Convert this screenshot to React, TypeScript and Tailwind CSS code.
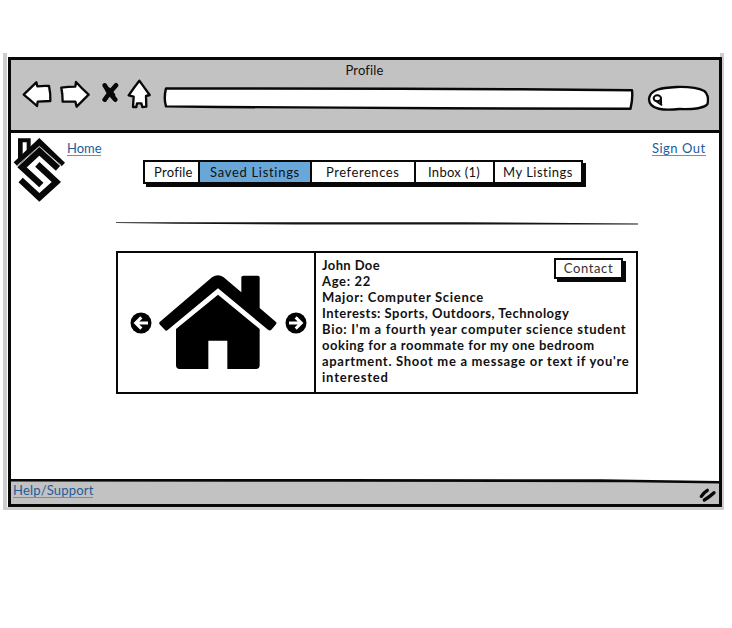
import React from "react";

const ink = "#080808";

function BackArrow() {
  return (
    <svg width="30" height="28" viewBox="66 105 90 84" fill="#fff" stroke={ink} strokeWidth="7" strokeLinejoin="round">
      <path d="M71 149 L109 112 L112 124 Q130 122 147 123 Q152 145 151 168 L113 170 L111 183 Q92 166 71 149Z" />
    </svg>
  );
}

function ForwardArrow() {
  return (
    <svg width="30" height="28" viewBox="180 105 90 84" fill="#fff" stroke={ink} strokeWidth="7" strokeLinejoin="round">
      <path d="M184 128 Q204 125 226 125 L228 111 Q246 131 266 149 L230 185 L226 170 L188 170 Q188 148 184 128Z" />
    </svg>
  );
}

function StopCross() {
  return (
    <svg width="18" height="22" viewBox="304 108 54 66" fill="none" stroke={ink} strokeLinecap="round">
      <path d="M315 121 Q328 145 347 164" strokeWidth="14" />
      <path d="M349 121 Q332 138 315 164" strokeWidth="14" />
      <path d="M326 136 L338 150" strokeWidth="17" />
    </svg>
  );
}

function HomeIcon() {
  return (
    <svg width="24" height="30" viewBox="381 102 72 90" fill="#fff" stroke={ink} strokeWidth="7" strokeLinejoin="round">
      <path d="M418 107 Q433 128 449 150 L438 153 L439 185 L427 186 L424 175 L411 175 L409 186 L399 186 L401 155 L386 151 Q403 126 418 107Z" />
    </svg>
  );
}

function AddressBar() {
  return (
    <svg width="472" height="24" viewBox="162 86 472 24" fill="#fff" stroke={ink} strokeWidth="2.4" strokeLinejoin="round">
      <path d="M166 88.4 L400 88.8 L520 89.3 L632 90.2 Q633 98 630.5 108.8 L440 108.3 L340 107.6 L220 107 L166 106.4 Q163.5 98 166 88.4Z" />
    </svg>
  );
}

function SearchBox() {
  return (
    <svg width="64" height="28" viewBox="141 119 192 84" fill="#fff" stroke={ink} strokeWidth="7" strokeLinecap="round">
      <path d="M147 161 C150 133 182 127 230 125 C268 124 299 130 313 137 C323 145 325 162 323 175 C316 187 283 193 238 191 C195 196 147 194 147 161Z" />
      <ellipse cx="172" cy="159" rx="11" ry="9" strokeWidth="6" />
      <path d="M183 161 L183 177 M172 170 L184 178" strokeWidth="6" />
    </svg>
  );
}

function Logo() {
  return (
    <svg width="53" height="66" viewBox="39 36 159 198" fill="none" stroke={ink}>
      <path fill={ink} stroke="none" fillRule="evenodd" d="M54 40 H92 V84 L54 118Z M68 52 V88 L80 78 V52Z" />
      <path fill={ink} stroke="none" d="M118 39 L195 113 L185 124 L118 65 L52 124 L41 112Z" />
      <path d="M174 130 L118 79 L66 127 L124 180" strokeWidth="19" />
      <path d="M112 118 L169 171 L118 217 L62 165" strokeWidth="19" />
      <path d="M50 123 L118 64 L184 122" stroke="#ddd" strokeWidth="2.5" />
    </svg>
  );
}

function House() {
  return (
    <svg width="118" height="95" viewBox="147 105 354 285" fill="#000">
      <path d="M149 246 L307 111 Q324 101 340 111 L394 157 V112 Q394 107 400 107 H444 Q449 107 449 112 V204 L498 246 Q501 249 498 253 L484 269 Q480 273 475 270 L324 145 L173 270 Q169 274 165 270 L150 254 Q146 250 149 246Z" />
      <path d="M198 267 L324 164 L449 267 V376 Q449 387 438 387 H352 V302 H295 V387 H209 Q198 387 198 376Z" />
    </svg>
  );
}

function CircleArrow({ flip = false }: { flip?: boolean }) {
  return (
    <svg width="22" height="22" viewBox="0 0 66 66" className={flip ? "-scale-x-100" : ""}>
      <circle cx="33" cy="33" r="31.5" fill="#000" />
      <path d="M54 33 H18 M34 16 L17 33 L34 50" fill="none" stroke="#fff" strokeWidth="9" />
    </svg>
  );
}

const tabs = [
  { label: "Profile", style: "w-[53px] pl-[9px] tracking-[0.25px]" },
  { label: "Saved Listings", style: "w-[112px] pl-[10px] bg-[#69a7d8] border-l-2 tracking-[0.7px]" },
  { label: "Preferences", style: "w-[104px] pl-[14px] border-l-2 tracking-[0.55px]" },
  { label: "Inbox (1)", style: "w-[79px] pl-[12px] border-l-2 tracking-[0.3px]" },
  { label: "My Listings", style: "w-[88px] pl-[8px] border-l-2 tracking-[0.5px]" },
];

const details = [
  { text: "John Doe", style: "tracking-[0.4px]" },
  { text: "Age: 22", style: "tracking-[0.65px]" },
  { text: "Major: Computer Science", style: "tracking-[0.7px]" },
  { text: "Interests: Sports, Outdoors, Technology", style: "tracking-[0.5px]" },
  { text: "Bio: I'm a fourth year computer science student", style: "tracking-[0.69px]" },
  { text: "ooking for a roommate for my one bedroom", style: "tracking-[0.52px]" },
  { text: "apartment. Shoot me a message or text if you're", style: "tracking-[0.69px]" },
  { text: "interested", style: "tracking-[0.8px]" },
];

const link = "h-[15px] border-b border-[#5796c8] text-[13px] leading-[15px] text-[#1d5b9b] whitespace-nowrap";

export default function App() {
  return (
    <div className="h-[628px] w-[732px] overflow-hidden bg-white pt-[53px] pl-[3px] font-['Lato',sans-serif] text-[13px] text-[#111]">
      <div className="h-[457px] w-[721px] border-x-4 border-b-3 border-[#cdcdcd] pt-1 pl-px">
        <div className="flex h-[450px] w-[714px] flex-col border-3 border-[#080808] bg-[#c2c2c2]">
          <header className="h-[73px] shrink-0 border-b-3 border-[#080808]">
            <div className="flex h-[21px] justify-center pt-[2px] pr-px leading-[16px] tracking-[0.15px]">Profile</div>
            <div className="flex h-[30px] items-start">
              <div className="ml-[11px] -mt-px"><BackArrow /></div>
              <div className="ml-[8px] -mt-px"><ForwardArrow /></div>
              <div className="ml-[11px]"><StopCross /></div>
              <div className="ml-[8px] -mt-[2px]"><HomeIcon /></div>
              <div className="ml-[11px] pt-[5px]"><AddressBar /></div>
              <div className="ml-[13px] pt-[4px]"><SearchBox /></div>
            </div>
          </header>

          <main className="h-[346px] shrink-0 bg-white">
            <div className="flex h-[89px]">
              <div className="w-[56px] pt-[4px] pl-[2px]"><Logo /></div>
              <div className="w-[76px] pt-[8px]">
                <a className={`${link} block w-[34px]`}>Home</a>
              </div>
              <nav className="mt-[27px] flex h-[24px] w-[440px] border-2 border-[#080808] bg-white shadow-[3px_3px_0_#080808]">
                {tabs.map((tab) => (
                  <div key={tab.label} className={`border-[#080808] leading-[20px] whitespace-nowrap ${tab.style}`}>
                    {tab.label}
                  </div>
                ))}
              </nav>
              <div className="ml-[69px] pt-[8px]">
                <a className={`${link} block w-[54px] tracking-[0.5px]`}>Sign Out</a>
              </div>
            </div>

            <svg className="ml-[105px] block" width="522" height="4" viewBox="0 0 522 4">
              <path d="M0 0.3 L100 0.2 L350 0.3 L522 1.4 V2.6 L360 2.6 L180 2.5 L60 1.7 L0 1Z" fill="#151515" />
            </svg>

            <section className="mt-[25px] ml-[105px] flex h-[143px] w-[522px] border-2 border-[#080808]">
              <div className="flex w-[198px] items-center border-r-2 border-[#080808]">
                <div className="ml-[12px]"><CircleArrow /></div>
                <div className="ml-[7px]"><House /></div>
                <div className="ml-[8px]"><CircleArrow flip /></div>
              </div>
              <div className="flex flex-1 justify-between pt-[4px] pl-[6px]">
                <div className="w-0 leading-[16px] font-bold whitespace-nowrap">
                  {details.map((line) => (
                    <p key={line.text} className={line.style}>{line.text}</p>
                  ))}
                </div>
                <button className="mt-px mr-[13px] h-[21px] w-[69px] border-2 border-[#080808] bg-white text-center leading-[17px] tracking-[0.6px] text-[#333] shadow-[3px_3px_0_#080808]">
                  Contact
                </button>
              </div>
            </section>
          </main>

          <footer className="flex h-[25px] shrink-0 flex-col">
            <svg className="block shrink-0" width="708" height="5" viewBox="0 0 708 5">
              <path d="M0 0 H708 V3 L0 1Z" fill="#fff" />
              <path d="M0 0 L330 0 L590 0.3 L708 2 V4.6 L620 3.3 L330 2.7 L0 2.6Z" fill={ink} />
            </svg>
            <div className="flex justify-between pl-[2px] pr-[2px]">
              <a className={`${link} -mt-px w-[80px] tracking-[0.2px]`}>Help/Support</a>
              <svg className="mt-[4px]" width="18" height="15" viewBox="298 54 54 45" stroke={ink} strokeWidth="10" strokeLinecap="round" fill="none">
                <path d="M305 79 Q312 68 323 61 M314 90 Q330 80 343 68" />
              </svg>
            </div>
          </footer>
        </div>
      </div>
    </div>
  );
}
